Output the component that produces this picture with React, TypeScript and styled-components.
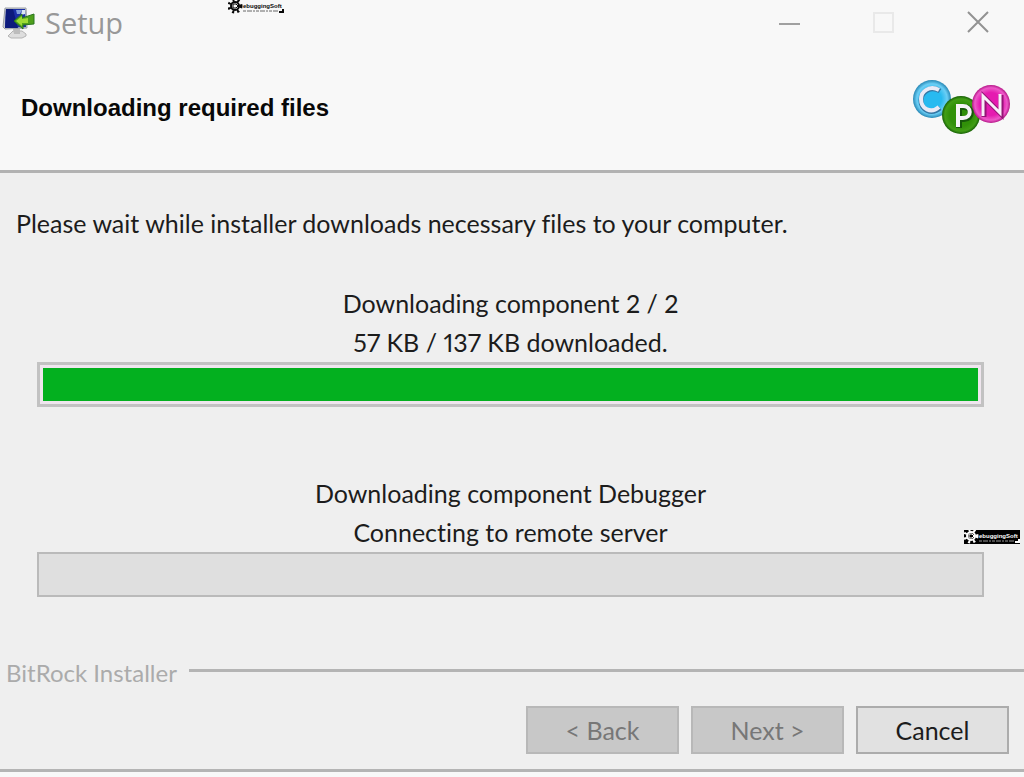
import React from 'react';
import styled, { createGlobalStyle } from 'styled-components';

const GlobalStyle = createGlobalStyle`
  *, *::before, *::after { box-sizing: border-box; }
  html, body, #root { height: 100%; }
  body {
    margin: 0;
    background: #f8f8f8;
    color: #1c1c1c;
    font-family: Lato, "Open Sans", sans-serif;
    font-size: 25px;
    font-variant-ligatures: none;
    font-variant-numeric: proportional-nums;
  }
`;

const Window = styled.div`
  position: relative;
  display: flex;
  flex-direction: column;
  min-height: 100%;
  padding-bottom: 5px;
`;

const TitleBar = styled.header`
  display: flex;
  align-items: center;
  height: 46px;
  padding: 0 34px 0 2px;
`;

const Title = styled.span`
  flex: 1;
  padding-left: 9px;
  color: #989898;
  font-family: "Open Sans", sans-serif;
  font-size: 29px;
  line-height: 46px;
`;

const WindowControls = styled.div`
  display: flex;
  gap: 70px;
`;

const ControlButton = styled.button`
  display: block;
  width: 24px;
  height: 24px;
  padding: 0;
  border: 0;
  background: transparent;
`;

const Banner = styled.div`
  display: flex;
  align-items: center;
  justify-content: space-between;
  height: 127px;
  padding: 0 12px 0 21px;
  border-bottom: 3px solid #b2b2b2;
`;

const Heading = styled.h1`
  margin: 0;
  color: #080808;
  font-family: "Liberation Sans", Arial, sans-serif;
  font-size: 24px;
  line-height: 30px;
`;

const Content = styled.main`
  flex: 1;
  padding: 31px 40px 0 37px;
  background: #efefef;
`;

const Message = styled.p`
  margin: 0 0 41px -21px;
  line-height: 39px;
  white-space: nowrap;
`;

const Task = styled.section`
  display: flex;
  flex-direction: column;
  line-height: 39px;
  text-align: center;
  white-space: nowrap;

  & + & { margin-top: 67px; }
`;

const Meter = styled.progress<{ $active?: boolean }>`
  display: block;
  width: 100%;
  height: 45px;
  padding: 3px;
  border: ${(p) => (p.$active ? '3px solid #c2c2c2' : '2px solid #bababa')};
  appearance: none;
  background: ${(p) => (p.$active ? '#efe6ee' : '#dfdfdf')};

  &::-webkit-progress-bar { background: transparent; }
  &::-webkit-progress-value { background: #03b01f; }
`;

const Footer = styled.footer`
  padding-bottom: 15px;
  border-bottom: 3px solid #b4b4b4;
  background: #efefef;
`;

const Brand = styled.div`
  display: flex;
  align-items: center;
  gap: 12px;
  padding-left: 6px;
  color: #ababab;
  font-size: 24px;
  line-height: 30px;

  &::after {
    content: '';
    flex: 1;
    height: 3px;
    margin-bottom: 6px;
    background: #b4b4b4;
  }
`;

const Actions = styled.div`
  display: flex;
  justify-content: flex-end;
  gap: 12px;
  padding: 18px 15px 0;
`;

const ActionButton = styled.button`
  width: 153px;
  height: 48px;
  padding: 0;
  border: 2px solid #acacac;
  background: #e1e1e1;
  color: #1c1c1c;
  font: inherit;

  &:disabled {
    border-color: #b8b8b8;
    background: #c8c8c8;
    color: #777777;
  }
`;

const Watermark = styled.div<{ $inverted?: boolean }>`
  position: absolute;
  top: ${(p) => (p.$inverted ? '530px' : '0')};
  ${(p) => (p.$inverted ? 'right: 4px;' : 'left: 228px;')}
  width: 56px;
  height: 14px;
  background: ${(p) => (p.$inverted ? '#000000' : 'transparent')};
  color: ${(p) => (p.$inverted ? '#ffffff' : '#080808')};

  svg { display: block; }
`;

const ComputerIcon = () => (
  <svg width="34" height="36" viewBox="0 0 34 36" aria-hidden="true">
    <path d="M8 29L11 26H20L24 29V31L20 33H9L6 31Z" fill="#dedede" stroke="#b4b4b4" />
    <path d="M11 24H18V29H12Z" fill="#bdbdbd" />
    <path d="M3 3L24 3L25 23L3 24L1 22Z" fill="#c8cbd0" stroke="#9a9fa6" />
    <path d="M4 4L23 4L24 22L3 23Z" fill="#1b2fa6" />
    <path d="M4 4L11 4L16 23L3 23Z" fill="#0c1a7c" />
    <path d="M14 5L20 5L18 9L15 9Z" fill="#7f9fdc" />
    <path d="M20 5L23 5V9L19 10Z" fill="#dce8f6" />
    <path d="M12 16L20 9V13L32 9V19L21 20V24Z" fill="#4fa01c" stroke="#2b7620" />
    <path d="M14 16L20 11V14L26 13V18L20 18V21Z" fill="#9edc35" />
  </svg>
);

const CpnLogo = () => (
  <svg width="99" height="56" viewBox="0 0 99 56" role="img" aria-label="CPN">
    <defs>
      <radialGradient id="blue"><stop offset=".5" stopColor="#28baf0" /><stop offset=".8" stopColor="#6bcef5" /><stop offset="1" stopColor="#2687b5" /></radialGradient>
      <radialGradient id="green"><stop offset=".6" stopColor="#319009" /><stop offset=".85" stopColor="#429e16" /><stop offset="1" stopColor="#176006" /></radialGradient>
      <radialGradient id="pink"><stop offset=".6" stopColor="#e51bb0" /><stop offset=".85" stopColor="#ed59c8" /><stop offset="1" stopColor="#b51788" /></radialGradient>
    </defs>
    <circle cx="19" cy="19" r="19" fill="url(#blue)" />
    <circle cx="48" cy="35" r="19" fill="url(#green)" />
    <circle cx="78" cy="24" r="19" fill="url(#pink)" />
    <g fill="none">
      <path d="M27 11C18 5 8 12 8 20C8 30 18 35 27 28" stroke="#3477a5" strokeWidth="5" />
      <path d="M26 10C17 5 8 11 8 19C8 29 18 34 26 27" stroke="#e9eaf6" strokeWidth="4" />
      <path d="M46 48V27H51C60 27 60 39 51 39H46" stroke="#17580b" strokeWidth="6" />
      <path d="M45 47V26H50C59 26 59 38 50 38H45" stroke="#f6f4f8" strokeWidth="4" />
      <path d="M71 37V17L88 34V15" stroke="#951477" strokeWidth="5" />
      <path d="M70 36V16L87 33V14" stroke="#f8eef8" strokeWidth="3" />
    </g>
  </svg>
);

const GearMark = ({ inverted = false }: { inverted?: boolean }) => (
  <Watermark $inverted={inverted}>
    <svg width="56" height="14" viewBox="0 0 56 14" role="img" aria-label="DebuggingSoft">
      <g fill="none" stroke="currentColor">
        <circle cx="7" cy="6" r="4" strokeWidth="2" />
        <circle cx="7" cy="6" r="6" strokeWidth="3" strokeDasharray="2 3" />
        <path d="M5 4V8H8L10 6L8 4Z" />
        <path d="M15 11H50" strokeDasharray="3 1 5 1 2 1" opacity=".6" />
        <path d="M51 12H55V9" strokeWidth="2" />
      </g>
      <text x="15" y="8" fill="currentColor" fontFamily="Liberation Sans" fontSize="6" fontWeight="bold">ebuggingSoft</text>
    </svg>
  </Watermark>
);

export default function App() {
  return (
    <Window>
      <GlobalStyle />
      <TitleBar>
        <ComputerIcon />
        <Title>Setup</Title>
        <WindowControls>
          <ControlButton aria-label="Minimize">
            <svg width="24" height="24"><path d="M1 13H22" stroke="#a0a0a0" strokeWidth="2" /></svg>
          </ControlButton>
          <ControlButton aria-label="Maximize" disabled>
            <svg width="24" height="24"><rect x="2" y="2" width="19" height="19" fill="none" stroke="#e9e9e9" strokeWidth="2" /></svg>
          </ControlButton>
          <ControlButton aria-label="Close">
            <svg width="24" height="24"><path d="M2 1L22 21M22 1L2 21" stroke="#929292" strokeWidth="2" /></svg>
          </ControlButton>
        </WindowControls>
      </TitleBar>
      <Banner>
        <Heading>Downloading required files</Heading>
        <CpnLogo />
      </Banner>
      <Content>
        <Message>Please wait while installer downloads necessary files to your computer.</Message>
        <Task>
          <label htmlFor="overall">Downloading component 2 / 2</label>
          <span>57 KB / 137 KB downloaded.</span>
          <Meter id="overall" $active value={100} max={100} />
        </Task>
        <Task>
          <label htmlFor="component">Downloading component Debugger</label>
          <span>Connecting to remote server</span>
          <Meter id="component" value={0} max={100} />
        </Task>
      </Content>
      <Footer>
        <Brand>BitRock Installer</Brand>
        <Actions>
          <ActionButton disabled>&lt; Back</ActionButton>
          <ActionButton disabled>Next &gt;</ActionButton>
          <ActionButton>Cancel</ActionButton>
        </Actions>
      </Footer>
      <GearMark />
      <GearMark inverted />
    </Window>
  );
}
